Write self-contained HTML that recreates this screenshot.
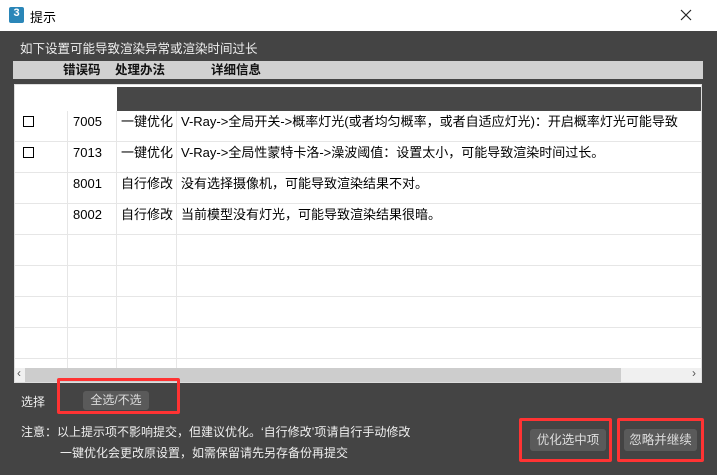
<!DOCTYPE html>
<html><head><meta charset="utf-8"><style>
*{margin:0;padding:0;box-sizing:border-box}
body{width:717px;height:475px;background:#444;font-family:"Liberation Sans","Noto Sans CJK SC",sans-serif;font-size:12px;color:#eee;position:relative;overflow:hidden}
.a{position:absolute}
.title{left:0;top:0;width:717px;height:31px;background:#fff;color:#000;font-size:13px}
.row{position:absolute;left:0;width:686px;height:31px;border-bottom:1px solid #e6e6e6;color:#000;font-size:13px;line-height:22px;white-space:nowrap}
.row span{position:absolute;top:0}
.btn{position:absolute;background:#5a5a5a;border-radius:3px;color:#ddd;text-align:center;font-size:12px}
.red{position:absolute;border:3px solid #f33;border-radius:2px}
</style></head><body>
<div class="a title">
 <div class="a" style="left:9px;top:7px;width:15px;height:16px;background:#2a86b8;border-radius:2px;color:#fff;font-size:11px;font-weight:bold;text-align:center;line-height:13px">3</div>
 <div class="a" style="left:30px;top:7px">提示</div>
 <svg class="a" style="left:680px;top:9px" width="12" height="12"><path d="M1 1L11 11M11 1L1 11" stroke="#222" stroke-width="1.2"/></svg>
</div>
<div class="a" style="left:20px;top:38px;font-size:12.5px">如下设置可能导致渲染异常或渲染时间过长</div>
<div class="a" style="left:13px;top:61px;width:690px;height:18px;background:#d0d0d0;color:#111;font-weight:bold;font-size:12.5px;line-height:18px">
 <span class="a" style="left:50px">错误码</span><span class="a" style="left:102px">处理办法</span><span class="a" style="left:198px">详细信息</span>
</div>
<div class="a" style="left:14px;top:84px;width:688px;height:299px;background:#fff;border:1px solid #ddd;overflow:hidden">
 <div class="a" style="left:102px;top:2px;width:586px;height:24px;background:#474747"></div>
 <div class="a" style="left:52px;top:26px;width:1px;height:260px;background:#e6e6e6"></div>
 <div class="a" style="left:101px;top:26px;width:1px;height:260px;background:#e6e6e6"></div>
 <div class="a" style="left:161px;top:26px;width:1px;height:260px;background:#e6e6e6"></div>
 <div class="row" style="top:26px"><span style="left:8px;top:5px;width:11px;height:11px;border:1px solid #000"></span><span style="left:58px">7005</span><span style="left:106px">一键优化</span><span style="left:166px">V-Ray-&gt;全局开关-&gt;概率灯光(或者均匀概率，或者自适应灯光)：开启概率灯光可能导致</span></div>
 <div class="row" style="top:57px"><span style="left:8px;top:5px;width:11px;height:11px;border:1px solid #000"></span><span style="left:58px">7013</span><span style="left:106px">一键优化</span><span style="left:166px">V-Ray-&gt;全局性蒙特卡洛-&gt;澡波阈值：设置太小，可能导致渲染时间过长。</span></div>
 <div class="row" style="top:88px"><span style="left:58px">8001</span><span style="left:106px">自行修改</span><span style="left:166px">没有选择摄像机，可能导致渲染结果不对。</span></div>
 <div class="row" style="top:119px"><span style="left:58px">8002</span><span style="left:106px">自行修改</span><span style="left:166px">当前模型没有灯光，可能导致渲染结果很暗。</span></div>
 <div class="row" style="top:150px"></div><div class="row" style="top:181px"></div><div class="row" style="top:212px"></div><div class="row" style="top:243px"></div>
 <div class="a" style="left:0;top:283px;width:686px;height:15px;background:#f0f0f0"></div>
 <div class="a" style="left:10px;top:283px;width:596px;height:15px;background:#cdcdcd"></div>
 <div class="a" style="left:2px;top:281px;color:#555;font-size:12px">‹</div>
 <div class="a" style="left:677px;top:281px;color:#555;font-size:12px">›</div>
</div>
<div class="a" style="left:21px;top:393px">选择</div>
<div class="btn" style="left:83px;top:391px;width:66px;height:19px;line-height:19px">全选/不选</div>
<div class="red" style="left:57px;top:378px;width:123px;height:36px"></div>
<div class="a" style="left:21px;top:423px">注意：以上提示项不影响提交，但建议优化。‘自行修改’项请自行手动修改</div>
<div class="a" style="left:60px;top:444px">一键优化会更改原设置，如需保留请先另存备份再提交</div>
<div class="btn" style="left:530px;top:429px;width:76px;height:22px;line-height:22px;font-size:12.5px">优化选中项</div>
<div class="btn" style="left:624px;top:429px;width:73px;height:22px;line-height:22px;font-size:12.5px">忽略并继续</div>
<div class="red" style="left:519px;top:418px;width:93px;height:44px"></div>
<div class="red" style="left:617px;top:418px;width:87px;height:44px"></div>
</body></html>
